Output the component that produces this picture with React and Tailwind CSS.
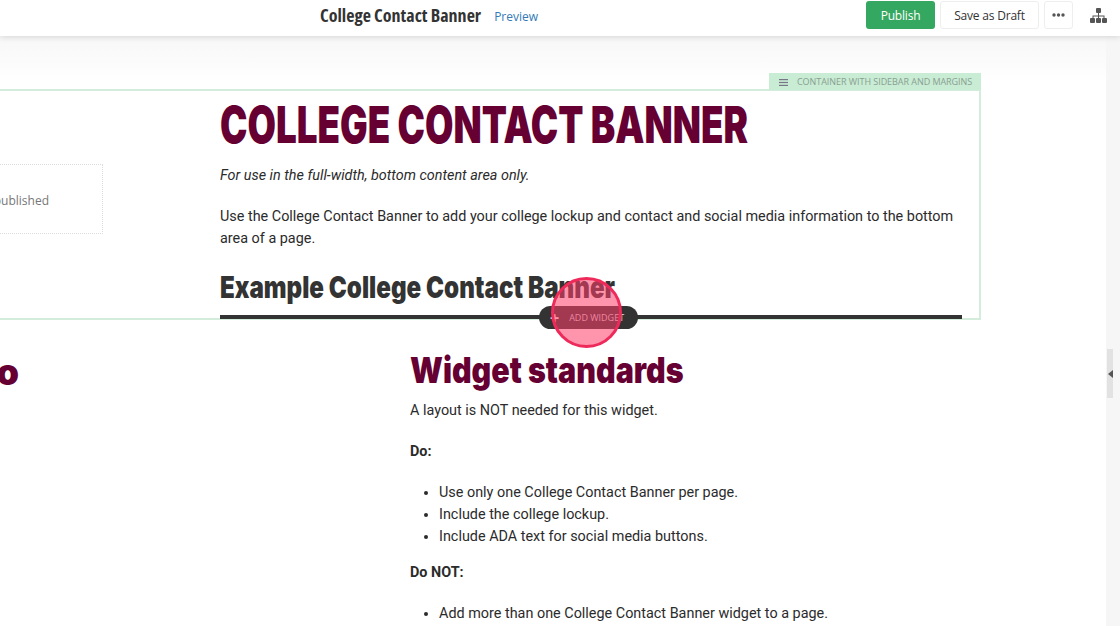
import React from 'react';

const body = "font-['Roboto',sans-serif] text-[14.4px] leading-[22px] text-[#2b2b2b]";
const openSans = "font-['Open_Sans',sans-serif]";
const display = "font-['Inter',sans-serif] font-black origin-left whitespace-nowrap";

function Header() {
  return (
    <header className={`relative z-20 flex h-9 shrink-0 items-start bg-white shadow-[0_1px_6px_rgba(0,0,0,0.14)] ${openSans}`}>
      <h1 className="ml-[320px] mt-[2px] text-[18px] leading-[27px] font-bold text-[#333] font-stretch-condensed whitespace-nowrap">College Contact Banner</h1>
      <a className="ml-[13px] mt-[8px] text-[12px] leading-[18px] text-[#337ab7]">Preview</a>
      <div className="ml-auto mt-[1px] flex items-center">
        <button className="flex h-[28px] w-[69px] items-center justify-center rounded-[3px] bg-[#34a860] pt-px text-[12px] tracking-[-0.2px] text-white">Publish</button>
        <button className="ml-[5px] flex h-[28px] w-[99px] items-center justify-center rounded-[3px] border border-[#eee] bg-white pt-px text-[12px] tracking-[-0.2px] text-[#333]">Save as Draft</button>
        <button className="ml-[5px] flex h-[28px] w-[29px] items-center justify-center rounded-[3px] border border-[#eee] bg-white">
          <svg width="13" height="4" viewBox="0 0 13 4" fill="#555">
            <circle cx="2" cy="2" r="1.7" />
            <circle cx="6.5" cy="2" r="1.7" />
            <circle cx="11" cy="2" r="1.7" />
          </svg>
        </button>
        <svg className="ml-[17px] mr-[13px]" width="17" height="15" viewBox="0 0 17 15" fill="#555">
          <rect x="6" y="0" width="5" height="5" rx="1" />
          <path d="M8 5h1v2.5h5.5V10h-1V8.5H9V10H8V8.5H3.5V10h-1V7.5H8z" />
          <rect x="0" y="10" width="5" height="5" rx="1" />
          <rect x="6" y="10" width="5" height="5" rx="1" />
          <rect x="12" y="10" width="5" height="5" rx="1" />
        </svg>
      </div>
    </header>
  );
}

function Container() {
  return (
    <section className="relative ml-[-20px] mr-[125px] mt-[53px] h-[231px] border-2 border-[#d3ecdc]">
      {/* tab on top of the container */}
      <div className={`absolute right-[-2px] top-[-18px] flex h-[17px] w-[212px] items-center whitespace-nowrap bg-[#c8ecd4] pt-[1px] text-[9px] tracking-[-0.05px] text-[#8a9e92] ${openSans}`}>
        <svg className="ml-[10px] mr-[9px] shrink-0" width="9" height="7" viewBox="0 0 9 7" fill="#778">
          <rect width="9" height="1.2" />
          <rect y="2.9" width="9" height="1.2" />
          <rect y="5.8" width="9" height="1.2" />
        </svg>
        CONTAINER WITH SIDEBAR AND MARGINS
      </div>
      <div className="flex h-full">
        <div className="w-[238px] shrink-0 pt-[73px]">
          <div className={`flex h-[70px] w-[121px] items-center justify-end border border-dotted border-[#ddd] pr-[53px] pt-[4px] text-[12px] text-[#777] ${openSans}`}>
            published
          </div>
        </div>
        <div className="w-[742px]">
          <h2 className={`${display} mt-[8px] h-[52px] text-[51px] leading-[52px] text-[#660033] scale-x-[0.72]`}>COLLEGE CONTACT BANNER</h2>
          <p className={`${body} mt-[14px] italic`}>For use in the full-width, bottom content area only.</p>
          <p className={`${body} mt-[19px]`}>Use the College Contact Banner to add your college lockup and contact and social media information to the bottom area of a page.</p>
          <h3 className={`${display} mt-[20px] h-[34px] text-[30px] leading-[34px] text-[#333] scale-x-[0.805]`}>Example College Contact Banner</h3>
        </div>
      </div>
    </section>
  );
}

function AddWidget() {
  return (
    <div className="relative mt-[-5px] ml-[220px] mr-[144px] h-[4px] bg-[#333]">
      <div className={`absolute left-[319px] top-[-9px] flex h-[23px] w-[99px] items-center rounded-full bg-[#333] text-[9px] text-[#ddd] ${openSans}`}>
        <span className="ml-[11px] text-[16px] font-bold leading-none text-white">+</span>
        <span className="ml-[10px]">ADD WIDGET</span>
      </div>
      {/* click marker from the recording */}
      <div className="absolute left-[331px] top-[-38px] h-[71px] w-[71px] rounded-full border-[3px] border-[#ee2a5b] bg-[#ff3c69]/55" />
    </div>
  );
}

function Standards() {
  return (
    <div className="flex">
      <div className="w-[410px] shrink-0 overflow-hidden">
        <h2 className={`${display} ml-[-200px] mt-[33px] h-[40px] w-[219px] overflow-hidden text-right text-[36px] leading-[40px] text-[#660033]`}>o</h2>
      </div>
      <div className="flex-1">
        <h2 className={`${display} mt-[31px] h-[40px] text-[36px] leading-[40px] text-[#660033] scale-x-[0.845]`}>Widget standards</h2>
        <p className={`${body} mt-[10px]`}>A layout is NOT needed for this widget.</p>
        <p className={`${body} mt-[19px] font-bold`}>Do:</p>
        <ul className={`${body} mt-[19px] list-disc pl-[29px] leading-[21.5px]`}>
          <li>Use only one College Contact Banner per page.</li>
          <li>Include the college lockup.</li>
          <li>Include ADA text for social media buttons.</li>
        </ul>
        <p className={`${body} mt-[14px] font-bold`}>Do NOT:</p>
        <ul className={`${body} mt-[19px] list-disc pl-[29px]`}>
          <li>Add more than one College Contact Banner widget to a page.</li>
        </ul>
      </div>
    </div>
  );
}

export default function App() {
  return (
    <div className="flex h-[626px] w-[1120px] flex-col overflow-hidden bg-white">
      <Header />
      <div className="flex min-h-0 flex-1">
        <main className="relative min-w-0 flex-1 bg-gradient-to-b from-[#f7f7f7] to-white to-[8%]">
          <Container />
          <AddWidget />
          <Standards />
        </main>
        <aside className="relative w-[14px] shrink-0 bg-[#f6f6f6]">
          <div className="absolute left-[1px] top-[313px] flex h-[49px] w-[6px] items-center justify-center bg-[#e2e2e2]">
            <div className="h-0 w-0 border-y-[4px] border-r-[5px] border-y-transparent border-r-[#555]" />
          </div>
        </aside>
      </div>
    </div>
  );
}
